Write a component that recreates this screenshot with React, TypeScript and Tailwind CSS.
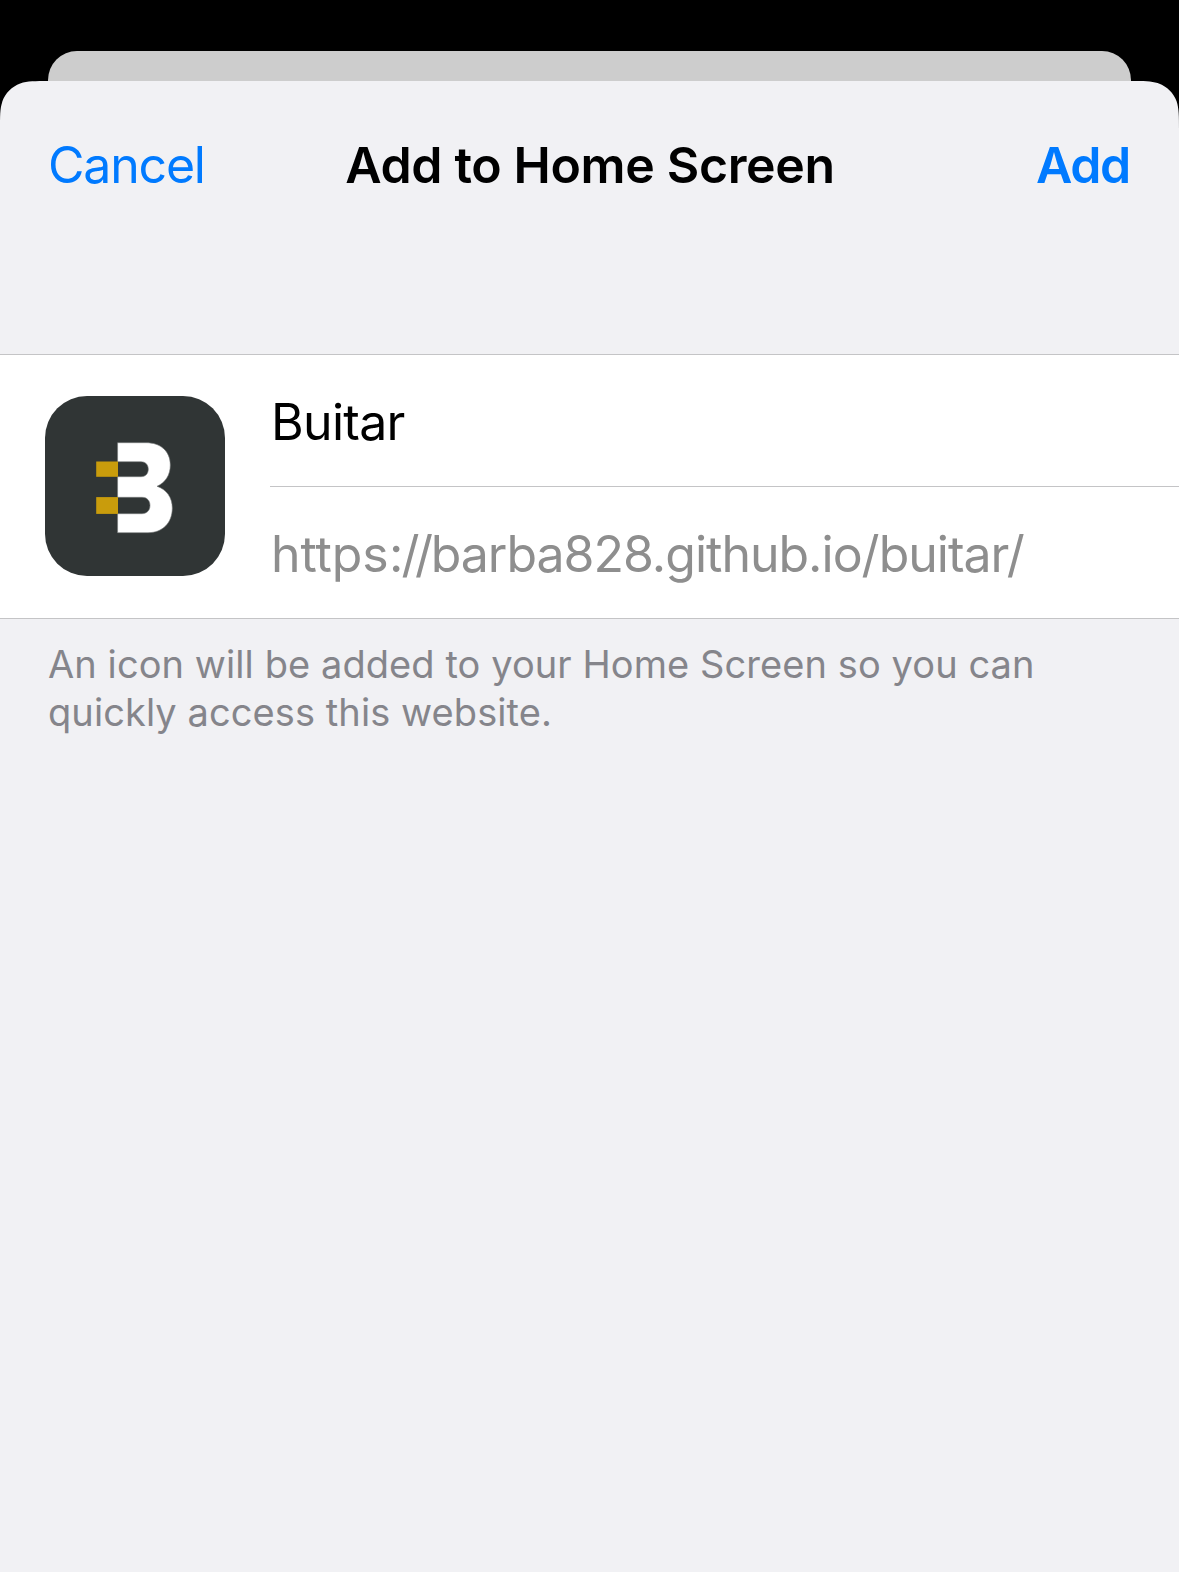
function BuitarIcon() {
  return (
    <div className="h-[180px] w-[180px] shrink-0 overflow-hidden rounded-[42px] bg-[#303535]">
      <svg viewBox="0 0 180 180" className="h-full w-full" aria-hidden="true">
        <path
          fill="#fff"
          stroke="#777b7b"
          strokeWidth="0.6"
          d="M72.6 46.7H101C115.5 46.7 125.3 55 125.3 69C125.3 79 120.5 86.5 112 90.3C121.5 93.5 127.3 101.5 127.3 112C127.3 127 117.5 136.7 103 136.7H72.6V117.7H97C102 117.7 105 114.2 105 109.5C105 104.5 102 101.3 97 101.3H72.6V80.7H96C100.5 80.7 103.3 77.7 103.3 73.2C103.3 68.7 100.5 65.7 96 65.7H72.6Z"
        />
        <rect x="51.2" y="65.5" width="21.8" height="15.3" fill="#c99c0c" />
        <rect x="51.2" y="101.1" width="21.8" height="16.8" fill="#c99c0c" />
      </svg>
    </div>
  );
}

export default function App() {
  return (
    <div className="flex h-[1572px] w-[1179px] flex-col overflow-hidden bg-black pt-[51px] font-['Inter',sans-serif]">
      <div className="mx-12 h-[30px] shrink-0 rounded-t-[29px] bg-[#cdcdcd]" />
      <main className="flex grow flex-col bg-[#f1f1f4] [clip-path:path('M48.9_0H1130.1C1144.2_0_1151.2_0_1157.6_2.1L1158.8_2.4C1167.1_5.4_1173.6_11.9_1176.6_20.2C1179_27.8_1179_34.8_1179_48.9V1500H0V48.9C0_34.8_0_27.8_2.1_21.4L2.4_20.2C5.4_11.9_11.9_5.4_20.2_2.4C27.8_0_34.8_0_48.9_0Z')]">
        <header className="grid h-[168px] grid-cols-[1fr_auto_1fr] items-center px-12 text-[50px] leading-none">
          <button className="justify-self-start tracking-[-1.2px] text-[#007aff]">Cancel</button>
          <h1 className="pl-px font-semibold tracking-[-0.35px]">Add to Home Screen</h1>
          <button className="mr-px justify-self-end font-semibold tracking-[-1.3px] text-[#007aff]">Add</button>
        </header>
        <section className="mt-[105px] flex h-[265px] items-start border-y border-[#c4c4c6] bg-white pl-[45px]">
          <div className="pt-[41px]">
            <BuitarIcon />
          </div>
          <div className="ml-[45px] flex h-full grow flex-col text-[50px] leading-none">
            <div className="flex h-[132px] items-center border-b border-[#c4c4c6] pt-[2px] pl-px">
              <span className="tracking-[-0.7px]">Buitar</span>
            </div>
            <div className="flex grow items-center pt-[2px] pl-px text-[#8e8e8e]">
              <span className="tracking-[-1px]">
                <span className="tracking-[-0.1px]">http</span>
                <span className="tracking-[0.4px]">s</span>
                <span className="tracking-[-2px]">:</span>
                <span className="tracking-[-4.5px]">/</span>
                <span className="tracking-[-2.4px]">/</span>
                barba828.github.io/buitar/
              </span>
            </div>
          </div>
        </section>
        <p className="mt-[21px] ml-12 text-[38px] leading-[48px] tracking-[0.08px] text-[#85858b]">
          An icon will be added to your Home Screen so you can
          <br />
          quickly access this website.
        </p>
      </main>
    </div>
  );
}
